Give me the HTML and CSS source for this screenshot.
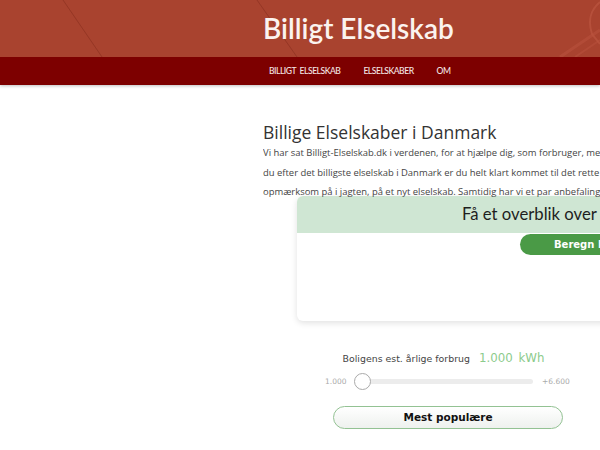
FILE: index.html
```html
<!DOCTYPE html>
<html lang="da">
<head>
<meta charset="utf-8">
<title>Billigt Elselskab</title>
<link rel="stylesheet" href="styles.css">
</head>
<body>
<header class="site-header">
  <svg class="header-art" width="600" height="57" viewBox="0 0 600 57" aria-hidden="true">
    <line x1="63" y1="0" x2="102" y2="57" stroke="#8e3222" stroke-width="1" opacity="0.7"/>
    <line x1="257" y1="0" x2="297" y2="57" stroke="#8e3222" stroke-width="1" opacity="0.7"/>
    <path d="M600 2 C590 10 588 22 592 34 L600 44" fill="none" stroke="#c05a44" stroke-width="2" opacity="0.6"/>
    <path d="M560 57 L600 30" fill="none" stroke="#b9523d" stroke-width="3" opacity="0.6"/>
    <path d="M575 57 L600 40" fill="none" stroke="#b9523d" stroke-width="2" opacity="0.5"/>
  </svg>
  <div class="brand-row">
    <div class="side"></div>
    <h1 class="brand">Billigt Elselskab</h1>
  </div>
</header>
<nav class="main-nav">
  <div class="side"></div>
  <ul class="nav-list">
    <li>BILLIGT ELSELSKAB</li>
    <li>ELSELSKABER</li>
    <li>OM</li>
  </ul>
</nav>
<main class="layout">
  <div class="side"></div>
  <section class="content">
    <h2 class="page-title">Billige Elselskaber i Danmark</h2>
    <p class="intro">
      <span class="line">Vi har sat Billigt-Elselskab.dk i verdenen, for at hjælpe dig, som forbruger, med at finde det billigste elselskab.</span>
      <span class="line">du efter det billigste elselskab i Danmark er du helt klart kommet til det rette sted, hvor vi guider dig.</span>
      <span class="line">opmærksom på i jagten, på et nyt elselskab. Samtidig har vi et par anbefalinger til dig, som du kan bruge.</span>
    </p>
    <div class="card">
      <div class="card-head">Få et overblik over priserne</div>
      <div class="card-body">
        <span class="calc-btn">Beregn I dag</span>
      </div>
    </div>
    <div class="usage">
      <div class="usage-label">
        <span class="usage-text">Boligens est. årlige forbrug</span>
        <span class="usage-value">1.000 kWh</span>
      </div>
      <div class="slider-row">
        <span class="slider-min">1.000</span>
        <div class="track"><span class="thumb"></span></div>
        <span class="slider-max">+6.600</span>
      </div>
      <button class="popular">Mest populære</button>
    </div>
  </section>
</main>
</body>
</html>
```

FILE: styles.css
```css
* { box-sizing: border-box; }
html, body { margin: 0; padding: 0; }
body {
  width: 600px;
  height: 450px;
  overflow: hidden;
  background: #fff;
  font-family: "Open Sans", "DejaVu Sans", sans-serif;
}
.side { width: 263px; flex: none; }

.site-header {
  position: relative;
  height: 57px;
  background: #a9432f;
  overflow: hidden;
}
.header-art { position: absolute; left: 0; top: 0; }
.brand-row { position: relative; display: flex; height: 57px; }
.brand {
  margin: 0;
  padding-top: 11px;
  font-family: Lato, "Open Sans", sans-serif;
  font-weight: 600;
  font-size: 28px;
  line-height: 34px;
  color: #fbf3ef;
  white-space: nowrap;
}

.main-nav {
  display: flex;
  height: 28px;
  background: #7d0000;
  box-shadow: 0 1px 3px rgba(0,0,0,0.25);
}
.nav-list {
  display: flex;
  gap: 23px;
  margin: 0;
  padding: 0 0 0 6px;
  list-style: none;
  align-items: center;
  font-family: Lato, "Open Sans", sans-serif;
  font-size: 8.6px;
  font-weight: 500;
  color: #f3e4e4;
  letter-spacing: -0.5px;
  word-spacing: 2px;
}

.layout { display: flex; }
.content {
  width: 337px;
  flex: none;
  padding-top: 36px;
}
.page-title {
  margin: 0;
  font-family: "Open Sans", sans-serif;
  font-weight: 400;
  font-size: 17.5px;
  line-height: 22px;
  color: #333;
  white-space: nowrap;
}
.intro {
  margin: 0;
  font-size: 9.45px;
  line-height: 19.5px;
  color: #444;
  overflow: hidden;
}
.intro .line { display: block; white-space: nowrap; }

.card {
  margin: -6px 0 0 34px;
  width: 420px;
  height: 125px;
  border-radius: 6px;
  background: #fff;
  box-shadow: 0 2px 6px rgba(0,0,0,0.12);
  overflow: hidden;
}
.card-head {
  height: 37px;
  background: #cfe6d3;
  padding-left: 165px;
  font-family: Lato, sans-serif;
  font-size: 16.7px;
  line-height: 37px;
  color: #1e1e1e;
  white-space: nowrap;
}
.card-body { padding: 1px 0 0 223px; }
.calc-btn {
  display: block;
  width: 170px;
  height: 21px;
  border-radius: 11px;
  background: #4a9a46;
  color: #fff;
  font-family: "DejaVu Sans", sans-serif;
  font-weight: 700;
  font-size: 10px;
  line-height: 21px;
  padding-left: 34px;
  white-space: nowrap;
}

.usage {
  width: 250px;
  margin: 30px 0 0 62px;
  display: flex;
  flex-direction: column;
  align-items: center;
}
.usage-label {
  display: flex;
  align-items: baseline;
  gap: 9px;
  padding-right: 13px;
}
.usage-text {
  font-family: "DejaVu Sans", sans-serif;
  font-size: 9.4px;
  color: #444;
}
.usage-value {
  font-family: "DejaVu Sans", sans-serif;
  font-size: 11.8px;
  color: #8ccb8c;
  word-spacing: 2px;
}
.slider-row {
  display: flex;
  align-items: center;
  margin-top: 12px;
  width: 250px;
}
.slider-min, .slider-max {
  font-family: "DejaVu Sans", sans-serif;
  font-size: 7.5px;
  color: #aaa;
}
.slider-min { width: 37px; }
.slider-max { margin-left: 9px; }
.track {
  position: relative;
  width: 171px;
  height: 5px;
  background: #ececec;
  border-radius: 3px;
}
.thumb {
  position: absolute;
  left: -8px;
  top: -6px;
  width: 17px;
  height: 17px;
  border-radius: 50%;
  background: #fff;
  border: 1.5px solid #aaa;
}
.popular {
  margin-top: 20px;
  margin-left: -4px;
  width: 230px;
  height: 23px;
  border-radius: 12px;
  border: 1px solid #93c293;
  background: linear-gradient(#ffffff, #eef1ee);
  font-family: "DejaVu Sans", sans-serif;
  font-weight: 700;
  font-size: 10.5px;
  color: #111;
  padding: 0;
}
```
